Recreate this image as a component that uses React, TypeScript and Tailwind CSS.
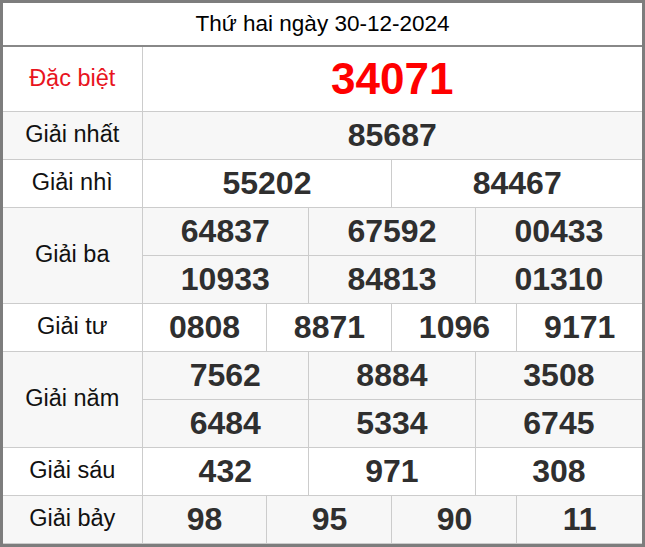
import React from "react"

type Row = {
  label: string
  lines: string[][]
  shaded?: boolean
}

const rows: Row[] = [
  { label: "Giải nhất", lines: [["85687"]], shaded: true },
  { label: "Giải nhì", lines: [["55202", "84467"]] },
  { label: "Giải ba", lines: [["64837", "67592", "00433"], ["10933", "84813", "01310"]], shaded: true },
  { label: "Giải tư", lines: [["0808", "8871", "1096", "9171"]] },
  { label: "Giải năm", lines: [["7562", "8884", "3508"], ["6484", "5334", "6745"]], shaded: true },
  { label: "Giải sáu", lines: [["432", "971", "308"]] },
  { label: "Giải bảy", lines: [["98", "95", "90", "11"]], shaded: true },
]

// 12-column grid for the number area
const span: Record<number, number> = { 1: 12, 2: 6, 3: 4, 4: 3 }

export default function App() {
  return (
    <div
      className="w-[645px] h-[547px] border-[3px] border-[#7d7d7d] bg-white overflow-hidden"
      style={{ fontFamily: '"Liberation Sans", Arial, sans-serif' }}
    >
      <table className="w-full table-fixed border-collapse">
        <colgroup>
          <col className="w-[139px]" />
          {Array.from({ length: 12 }).map((_, i) => (
            <col key={i} />
          ))}
        </colgroup>
        <tbody>
          <tr>
            <td colSpan={13} className="h-[43px] border-b-2 border-[#888] text-center text-[22.5px] text-black leading-none">
              Thứ hai ngày 30-12-2024
            </td>
          </tr>
          <tr>
            <td className="h-[65px] border-r border-b border-[#ccc] text-center text-[23.5px] text-[#e8141e]">Đặc biệt</td>
            <td colSpan={12} className="border-b border-[#ccc] text-center text-[44px] font-bold text-[#ff0000] leading-none">
              34071
            </td>
          </tr>
          {rows.map((row) =>
            row.lines.map((line, li) => (
              <tr key={row.label + li} className={row.shaded ? "bg-[#f7f7f7]" : "bg-white"}>
                {li === 0 && (
                  <td
                    rowSpan={row.lines.length}
                    className="border-r border-b border-[#ccc] text-center text-[23.5px] text-[#111]"
                  >
                    {row.label}
                  </td>
                )}
                {line.map((num, ni) => (
                  <td
                    key={ni}
                    colSpan={span[line.length]}
                    className="h-[48px] border-b border-r last:border-r-0 border-[#ccc] text-center text-[32px] font-bold text-[#2f2f2f] leading-none"
                  >
                    {num}
                  </td>
                ))}
              </tr>
            ))
          )}
        </tbody>
      </table>
    </div>
  )
}
